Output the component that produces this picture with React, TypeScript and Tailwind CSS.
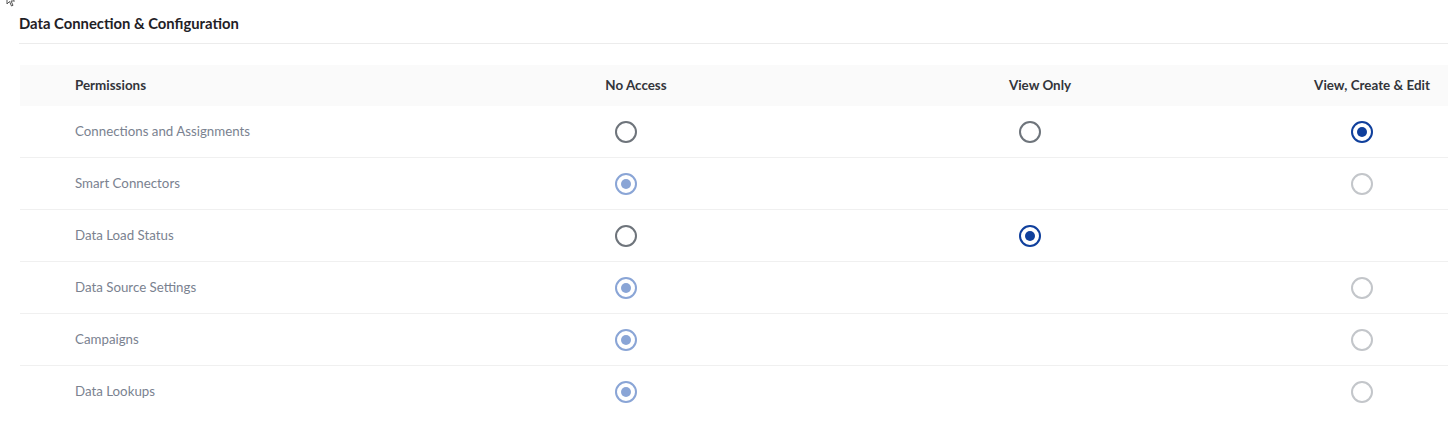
import React from "react"

type Radio = "off" | "on" | "dis-on" | "dis-off" | "none"

const ROWS: { name: string; cells: [Radio, Radio, Radio] }[] = [
  { name: "Connections and Assignments", cells: ["off", "off", "on"] },
  { name: "Smart Connectors", cells: ["dis-on", "none", "dis-off"] },
  { name: "Data Load Status", cells: ["off", "on", "none"] },
  { name: "Data Source Settings", cells: ["dis-on", "none", "dis-off"] },
  { name: "Campaigns", cells: ["dis-on", "none", "dis-off"] },
  { name: "Data Lookups", cells: ["dis-on", "none", "dis-off"] },
]

function RadioDot({ kind }: { kind: Radio }) {
  if (kind === "none") return null
  const ring =
    kind === "on" ? "border-[#0f3f9c]" : kind === "dis-on" ? "border-[#8aa5d6]" : kind === "off" ? "border-[#6e747b]" : "border-[#c3c6ca]"
  return (
    <span className={`w-[22px] h-[22px] rounded-full border-2 ${ring} bg-white flex items-center justify-center`}>
      {kind === "on" && <span className="w-[10px] h-[10px] rounded-full bg-[#0f3f9c]" />}
      {kind === "dis-on" && <span className="w-[10px] h-[10px] rounded-full bg-[#8aa5d6]" />}
    </span>
  )
}

export default function App() {
  return (
    <div className="relative w-[1448px] h-[432px] overflow-hidden bg-white font-['Lato','Noto_Sans',sans-serif]">
      <svg className="absolute left-[4px] top-[-6px]" width="16" height="14" viewBox="0 0 16 14">
        <path d="M3 0 L3 10 L5.5 7.5 L7.5 12 L9 11.3 L7 7 L10.5 7 Z" fill="white" stroke="#555" strokeWidth="1" />
      </svg>

      <div className="pl-[19px] pt-[14px]">
        <h2 className="text-[14.8px] font-bold text-[#1f2126] leading-[18px]">Data Connection &amp; Configuration</h2>
        <div className="mt-[11px] h-px bg-[#ececec]" />
      </div>

      <div className="ml-[20px] mt-[21px] w-[1470px]">
        <div className="grid grid-cols-[406px_400px_408px_256px] h-[41px] bg-[#fafafa] items-center text-[13.4px] font-bold text-[#33353a]">
          <div className="pl-[55px]">Permissions</div>
          <div className="pl-5 text-center">No Access</div>
          <div className="pl-5 text-center">View Only</div>
          <div className="pl-5 text-center">View, Create &amp; Edit</div>
        </div>
        {ROWS.map((r, idx) => (
          <div
            key={r.name}
            className={`grid grid-cols-[406px_400px_408px_256px] h-[52px] items-center text-[13.3px] text-[#7a8290] ${idx < ROWS.length - 1 ? "border-b border-[#f0f0f0]" : ""}`}
          >
            <div className="pl-[55px]">{r.name}</div>
            {r.cells.map((c, i) => (
              <div key={i} className="flex justify-center">
                <RadioDot kind={c} />
              </div>
            ))}
          </div>
        ))}
      </div>
    </div>
  )
}
